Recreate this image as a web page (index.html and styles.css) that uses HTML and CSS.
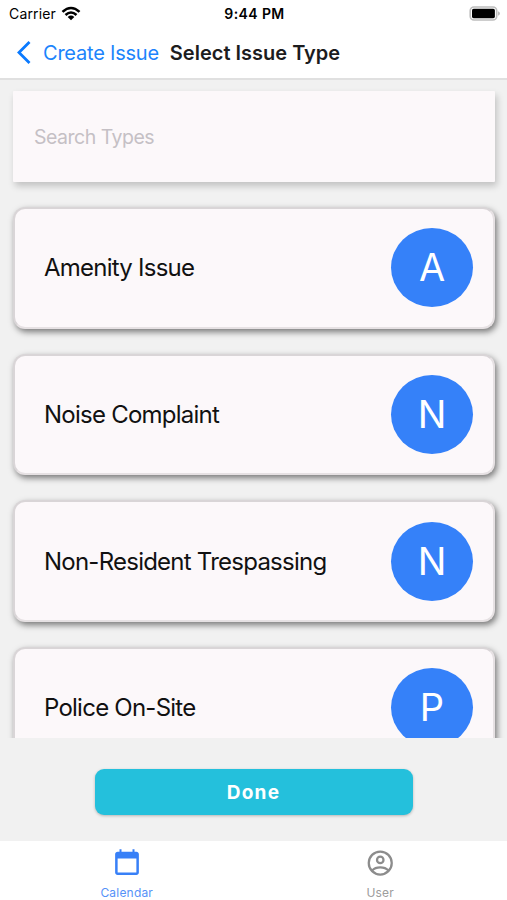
FILE: index.html
```html
<!DOCTYPE html>

<html lang="en">
    <head>
        <title>Select Issue Type</title>
        <meta charset="utf-8" />
        <meta name="viewport" content="width=device-width, initial-scale=1">
        <link rel="stylesheet" href="styles.css">
    </head>

    <body>
        <div id="wrapper">
            <div class="status">
                <div class="carrier">
                    <span>Carrier</span>
                    <svg width="20" height="16" viewBox="0 0 20 16">
                        <g fill="none" stroke="#000" stroke-width="2.6">
                            <path d="M1.5 5.9Q10 -1.9 18.5 5.9" />
                            <path d="M4.5 9Q10 4 15.5 9" />
                        </g>
                        <path d="M6.7 10.9Q10 8.1 13.3 10.9L10 14.2Z" />
                    </svg>
                </div>
                <div class="time">9:44 PM</div>
                <svg class="battery" width="31" height="16" viewBox="0 0 31 16">
                    <rect x="1.2" y="1" width="26.5" height="13" rx="3.8" fill="#fff" stroke="#bdbdbd" stroke-width="1.6" />
                    <rect x="3" y="2.8" width="22.9" height="9.4" rx="1.6" />
                    <path d="M29 5.3Q31 6 31 7.5Q31 9 29 9.7Z" fill="#bdbdbd" />
                </svg>
            </div>

            <header>
                <svg width="16" height="26" viewBox="0 0 16 26">
                    <path d="M13.5 2L3 12.5L13.5 23" fill="none" stroke="#0a7aff" stroke-width="2.8" />
                </svg>
                <a class="back">Create Issue</a>
                <h1>Select Issue Type</h1>
            </header>

            <main>
                <input type="text" class="search" placeholder="Search Types">
                <div class="card">
                    <span class="name">Amenity Issue</span>
                    <span class="avatar">A</span>
                </div>
                <div class="card">
                    <span class="name">Noise Complaint</span>
                    <span class="avatar">N</span>
                </div>
                <div class="card">
                    <span class="name">Non-Resident Trespassing</span>
                    <span class="avatar">N</span>
                </div>
                <div class="card">
                    <span class="name">Police On-Site</span>
                    <span class="avatar">P</span>
                </div>
            </main>

            <div class="actions">
                <button type="button" class="done">Done</button>
            </div>

            <nav>
                <div class="tab active">
                    <svg width="30" height="30" viewBox="0 0 24 24">
                        <path fill="currentColor" d="M19.5 3H18V1h-1.6v2H7.6V1H6v2H4.5c-1.100 0-2 .9-2 2v14.5c0 1.100.9 2 2 2h15c1.100 0 2-.9 2-2V5c0-1.100-.9-2-2-2zm0 16.500h-15V8.300h15z" />
                    </svg>
                    <span>Calendar</span>
                </div>
                <div class="tab">
                    <svg width="30" height="30" viewBox="0 0 24 24">
                        <g fill="none" stroke="currentColor" stroke-width="1.8">
                            <circle cx="12.2" cy="12" r="9.2" />
                            <circle cx="12.2" cy="9.5" r="2.6" />
                            <path d="M5.7 18C8.8 14.7 15.6 14.7 18.7 18" />
                        </g>
                    </svg>
                    <span>User</span>
                </div>
            </nav>
        </div>
    </body>
</html>
```

FILE: styles.css
```css
body {
    margin: 0;
    font-family: Inter, "Liberation Sans", sans-serif;
    background-color: #ffffff;
}

#wrapper {
    display: flex;
    flex-direction: column;
    height: 900px;
    overflow: hidden;
}

.status {
    display: grid;
    grid-template-columns: 1fr auto 1fr;
    align-items: center;
    height: 27px;
    padding: 0 7px 0 9px;
    box-sizing: border-box;
    font-size: 14px;
}

.carrier {
    display: flex;
    align-items: center;
    gap: 5px;
    letter-spacing: 0.15px;
}

.time {
    font-weight: 600;
    letter-spacing: 0.4px;
}

.battery {
    justify-self: end;
}

header {
    display: flex;
    align-items: center;
    height: 53px;
    box-sizing: border-box;
    padding: 0 0 0 16px;
    border-bottom: 2px solid #e0e0e0;
    font-size: 20px;
    white-space: nowrap;
}

.back {
    margin-left: 11px;
    color: #1c84fc;
    letter-spacing: -0.22px;
}

h1 {
    margin: 0 0 0 11px;
    font-size: 20px;
    font-weight: 600;
    color: #1c1c1e;
}

main {
    display: flex;
    flex-direction: column;
    height: 658px;
    padding: 11px 12px 0 13px;
    box-sizing: border-box;
    overflow: hidden;
    background-color: #f1f1f1;
}

.search {
    flex: none;
    height: 91px;
    margin-bottom: 25px;
    padding: 0 21px;
    border: none;
    border-radius: 1px;
    box-sizing: border-box;
    background-color: #fcf8fa;
    box-shadow: 2px 4px 7px rgba(0, 0, 0, 0.2);
    font-family: inherit;
    font-size: 19.5px;
    letter-spacing: -0.5px;
}

.search::placeholder {
    color: #c5c0c5;
}

.card {
    display: flex;
    flex: none;
    align-items: center;
    justify-content: space-between;
    height: 121.7px;
    margin-bottom: 25px;
    padding: 0 20px 0 29px;
    border: 2px solid #d9d5d7;
    border-right-color: #e6e1e3;
    border-bottom-color: #e6e1e3;
    border-radius: 12px;
    box-sizing: border-box;
    background-color: #fcf8fa;
    box-shadow: 2px 3px 6px rgba(0, 0, 0, 0.5);
}

.name {
    font-size: 24px;
    letter-spacing: -0.76px;
    color: #111111;
}

.avatar {
    width: 82px;
    height: 79px;
    border-radius: 50%;
    background-color: #3581f9;
    color: #ffffff;
    font-size: 38px;
    line-height: 79px;
    text-align: center;
}

.actions {
    height: 103px;
    padding-top: 31px;
    box-sizing: border-box;
    background-color: #f1f1f1;
    text-align: center;
}

.done {
    width: 318px;
    height: 46px;
    border: none;
    border-radius: 9px;
    background-color: #24c0dc;
    box-shadow: 0 1px 3px rgba(0, 0, 0, 0.25);
    color: #ffffff;
    font-family: inherit;
    font-size: 19px;
    font-weight: 700;
    letter-spacing: 1.3px;
}

nav {
    display: flex;
    height: 59px;
}

.tab {
    display: flex;
    flex: 1;
    flex-direction: column;
    align-items: center;
    padding-top: 7px;
    color: #8c8c8c;
    font-size: 12px;
    line-height: 15px;
}

.tab span {
    margin-top: 7px;
    letter-spacing: 0.2px;
    opacity: 0.85;
}

.active {
    color: #3880f7;
}
```
